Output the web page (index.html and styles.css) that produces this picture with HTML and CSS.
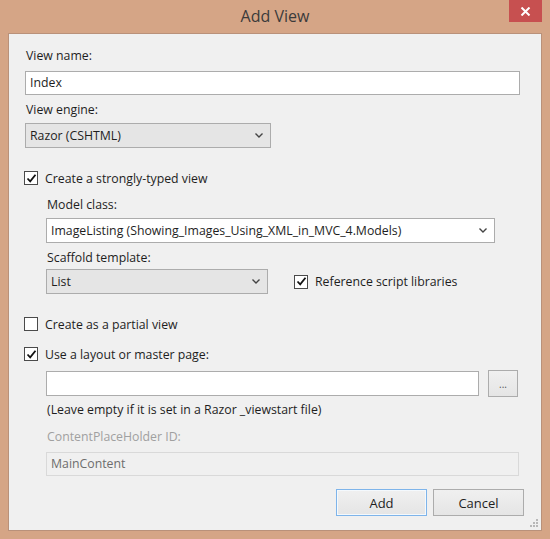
FILE: index.html
```html
<html>

<head>
    <meta charset="utf-8" />
    <link rel="stylesheet" href="styles.css">
</head>

<body>
    <div class="window">
        <div class="titlebar">
            <span class="title">Add View</span>
            <div class="close">
                <svg width="11" height="9" viewBox="0 0 11 9">
                    <path d="M1.5 0.5 L9.5 8.5 M9.5 0.5 L1.5 8.5" stroke="#fff" stroke-width="2" fill="none" />
                </svg>
            </div>
        </div>
        <div class="client">
            <div class="caption first">View name:</div>
            <div class="textbox wide">Index</div>

            <div class="caption">View engine:</div>
            <div class="combo engine">
                <span>Razor (CSHTML)</span>
                <svg class="chevron" width="8" height="5" viewBox="0 0 8 5"><path d="M0.5 0.5 L4 4 L7.5 0.5" stroke="#444" stroke-width="1.4" fill="none" /></svg>
            </div>

            <div class="check-row top-gap">
                <div class="checkbox checked">
                    <svg width="11" height="11" viewBox="0 0 11 11"><path d="M1.5 5.5 L4.2 8.3 L9.5 1.8" stroke="#111" stroke-width="1.8" fill="none" /></svg>
                </div>
                <span>Create a strongly-typed view</span>
            </div>

            <div class="indent">
                <div class="caption model-caption">Model class:</div>
                <div class="combo editable model">
                    <span>ImageListing (Showing_Images_Using_XML_in_MVC_4.Models)</span>
                    <svg class="chevron" width="8" height="5" viewBox="0 0 8 5"><path d="M0.5 0.5 L4 4 L7.5 0.5" stroke="#444" stroke-width="1.4" fill="none" /></svg>
                </div>

                <div class="caption">Scaffold template:</div>
                <div class="scaffold-row">
                    <div class="combo scaffold">
                        <span>List</span>
                        <svg class="chevron" width="8" height="5" viewBox="0 0 8 5"><path d="M0.5 0.5 L4 4 L7.5 0.5" stroke="#444" stroke-width="1.4" fill="none" /></svg>
                    </div>
                    <div class="check-row">
                        <div class="checkbox checked">
                            <svg width="11" height="11" viewBox="0 0 11 11"><path d="M1.5 5.5 L4.2 8.3 L9.5 1.8" stroke="#111" stroke-width="1.8" fill="none" /></svg>
                        </div>
                        <span>Reference script libraries</span>
                    </div>
                </div>
            </div>

            <div class="check-row top-gap">
                <div class="checkbox"></div>
                <span>Create as a partial view</span>
            </div>

            <div class="check-row layout-check">
                <div class="checkbox checked">
                    <svg width="11" height="11" viewBox="0 0 11 11"><path d="M1.5 5.5 L4.2 8.3 L9.5 1.8" stroke="#111" stroke-width="1.8" fill="none" /></svg>
                </div>
                <span>Use a layout or master page:</span>
            </div>

            <div class="indent">
                <div class="layout-row">
                    <div class="textbox layout"></div>
                    <div class="button browse">...</div>
                </div>
                <div class="caption hint">(Leave empty if it is set in a Razor _viewstart file)</div>

                <div class="caption disabled placeholder-caption">ContentPlaceHolder ID:</div>
                <div class="textbox disabled main">MainContent</div>
            </div>

            <div class="buttons">
                <div class="button default">Add</div>
                <div class="button">Cancel</div>
            </div>

            <div class="grip">
                <svg width="9" height="9" viewBox="0 0 9 9" fill="#b8b8b8">
                    <rect x="7" y="1" width="2" height="2" />
                    <rect x="4" y="4" width="2" height="2" />
                    <rect x="7" y="4" width="2" height="2" />
                    <rect x="1" y="7" width="2" height="2" />
                    <rect x="4" y="7" width="2" height="2" />
                    <rect x="7" y="7" width="2" height="2" />
                </svg>
            </div>
        </div>
    </div>
</body>

</html>
```

FILE: styles.css
```css
body {
    margin: 0;
    background-color: #d5a586;
    font-family: "Open Sans", "Noto Sans", sans-serif;
    font-size: 12.3px;
    color: #1e1e1e;
}

.window {
    width: 550px;
    height: 539px;
    display: flex;
    flex-direction: column;
    position: relative;
}

.titlebar {
    height: 33px;
    display: flex;
    justify-content: center;
    align-items: flex-start;
}

.title {
    margin-top: 5px;
    font-size: 16px;
    color: #3b3b3b;
}

.close {
    position: absolute;
    top: 0;
    right: 8px;
    width: 33px;
    height: 22px;
    background-color: #c75050;
    display: flex;
    align-items: center;
    justify-content: center;
}

.client {
    position: relative;
    margin: 0 8px 8px 8px;
    height: 496px;
    background-color: #f0f0f0;
    border: 1px solid #b9917a;
    padding: 0 17px 0 16px;
}

.caption {
    line-height: 16px;
    margin-top: 7px;
    padding-left: 1px;
}

.caption.first {
    margin-top: 14px;
}

.textbox {
    box-sizing: border-box;
    height: 24px;
    margin-top: 7px;
    border: 1px solid #acacac;
    background-color: #fff;
    padding: 0 4px;
    line-height: 22px;
}

.textbox.wide {
    width: 495px;
}

.combo {
    box-sizing: border-box;
    height: 25px;
    margin-top: 5px;
    border: 1px solid #acacac;
    background-color: #e5e5e5;
    padding: 0 4px;
    display: flex;
    align-items: center;
    justify-content: space-between;
}

.combo .chevron {
    margin-right: 3px;
}

.combo.engine {
    width: 246px;
}

.combo.editable {
    background-color: #fff;
}

.combo.model {
    width: 449px;
}

.combo.scaffold {
    width: 222px;
    margin-top: 0;
}

.check-row {
    display: flex;
    align-items: center;
    height: 16px;
}

.check-row.top-gap {
    margin-top: 22px;
}

.check-row.layout-check {
    margin-top: 14px;
}

.checkbox {
    box-sizing: border-box;
    width: 14px;
    height: 14px;
    margin: 0 7px 0 -1px;
    border: 1px solid #4a4a4a;
    background-color: #fff;
    display: flex;
    align-items: center;
    justify-content: center;
}

.indent {
    padding-left: 21px;
}

.caption.model-caption {
    margin-top: 11px;
}

.scaffold-row {
    margin-top: 3px;
    display: flex;
    align-items: center;
    gap: 27px;
}

.layout-row {
    margin-top: 8px;
    display: flex;
    align-items: center;
}

.textbox.layout {
    width: 433px;
    height: 25px;
    margin-top: 0;
}

.button {
    box-sizing: border-box;
    height: 27px;
    border: 1px solid #acacac;
    background: linear-gradient(#f0f0f0, #e5e5e5);
    display: flex;
    align-items: center;
    justify-content: center;
    font-size: 13px;
}

.button.browse {
    width: 30px;
    margin-left: 9px;
    font-size: 10px;
    color: #555;
}

.caption.hint {
    margin-top: 5px;
}

.caption.disabled {
    color: #a0a0a0;
}

.caption.placeholder-caption {
    margin-top: 11px;
}

.textbox.disabled {
    background-color: #f0f0f0;
    border-color: #d9d9d9;
    color: #6d6d6d;
}

.textbox.main {
    width: 473px;
}

.buttons {
    margin-top: 13px;
    display: flex;
    justify-content: flex-end;
    gap: 6px;
}

.buttons .button {
    width: 91px;
}

.button.default {
    border-color: #7eb4ea;
    box-shadow: inset 0 0 0 1px #f4f9fd;
}

.grip {
    position: absolute;
    right: 3px;
    bottom: 3px;
    line-height: 0;
}
```
